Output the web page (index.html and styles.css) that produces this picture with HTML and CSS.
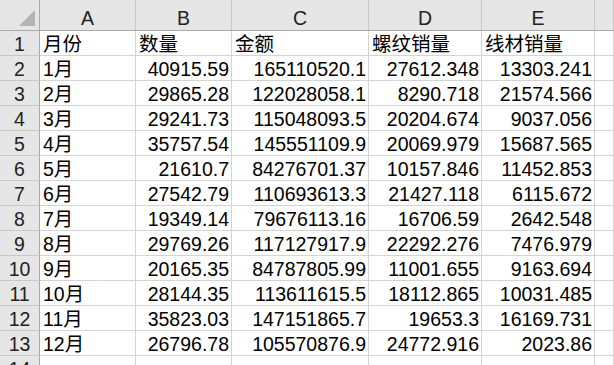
FILE: index.html
```html
<!DOCTYPE html>
<html lang="zh">
<head>
<meta charset="utf-8">
<title>Sheet</title>
<link rel="stylesheet" href="styles.css">
</head>
<body>
<div class="sheet">
  <div class="corner"><svg class="tri" width="39" height="30" viewBox="0 0 39 30"><polygon points="35,10 35,26 19,26" fill="#b4b4b4"/></svg></div>
  <div class="colh">A</div><div class="colh">B</div><div class="colh">C</div><div class="colh">D</div><div class="colh">E</div><div class="colh last"></div>

  <div class="rowh">1</div><div class="c">月份</div><div class="c">数量</div><div class="c">金额</div><div class="c">螺纹销量</div><div class="c">线材销量</div><div class="c"></div>
  <div class="rowh">2</div><div class="c">1月</div><div class="c n">40915.59</div><div class="c n">165110520.1</div><div class="c n">27612.348</div><div class="c n">13303.241</div><div class="c"></div>
  <div class="rowh">3</div><div class="c">2月</div><div class="c n">29865.28</div><div class="c n">122028058.1</div><div class="c n">8290.718</div><div class="c n">21574.566</div><div class="c"></div>
  <div class="rowh">4</div><div class="c">3月</div><div class="c n">29241.73</div><div class="c n">115048093.5</div><div class="c n">20204.674</div><div class="c n">9037.056</div><div class="c"></div>
  <div class="rowh">5</div><div class="c">4月</div><div class="c n">35757.54</div><div class="c n">145551109.9</div><div class="c n">20069.979</div><div class="c n">15687.565</div><div class="c"></div>
  <div class="rowh">6</div><div class="c">5月</div><div class="c n">21610.7</div><div class="c n">84276701.37</div><div class="c n">10157.846</div><div class="c n">11452.853</div><div class="c"></div>
  <div class="rowh">7</div><div class="c">6月</div><div class="c n">27542.79</div><div class="c n">110693613.3</div><div class="c n">21427.118</div><div class="c n">6115.672</div><div class="c"></div>
  <div class="rowh">8</div><div class="c">7月</div><div class="c n">19349.14</div><div class="c n">79676113.16</div><div class="c n">16706.59</div><div class="c n">2642.548</div><div class="c"></div>
  <div class="rowh">9</div><div class="c">8月</div><div class="c n">29769.26</div><div class="c n">117127917.9</div><div class="c n">22292.276</div><div class="c n">7476.979</div><div class="c"></div>
  <div class="rowh">10</div><div class="c">9月</div><div class="c n">20165.35</div><div class="c n">84787805.99</div><div class="c n">11001.655</div><div class="c n">9163.694</div><div class="c"></div>
  <div class="rowh">11</div><div class="c">10月</div><div class="c n">28144.35</div><div class="c n">113611615.5</div><div class="c n">18112.865</div><div class="c n">10031.485</div><div class="c"></div>
  <div class="rowh">12</div><div class="c">11月</div><div class="c n">35823.03</div><div class="c n">147151865.7</div><div class="c n">19653.3</div><div class="c n">16169.731</div><div class="c"></div>
  <div class="rowh">13</div><div class="c">12月</div><div class="c n">26796.78</div><div class="c n">105570876.9</div><div class="c n">24772.916</div><div class="c n">2023.86</div><div class="c"></div>
  <div class="rowh">14</div><div class="c"></div><div class="c"></div><div class="c"></div><div class="c"></div><div class="c"></div><div class="c"></div>
</div>
</body>
</html>
```
FILE: styles.css
```css
html, body {
  margin: 0;
  padding: 0;
  background: #ffffff;
  overflow: hidden;
}
.sheet {
  display: grid;
  grid-template-columns: 40px 96px 96px 137px 113px 113px 1fr;
  grid-template-rows: 31px;
  grid-auto-rows: 25px;
  width: 614px;
  font-family: "Liberation Sans", "Noto Sans CJK SC", sans-serif;
  font-size: 19.5px;
  color: #000;
}
.sheet > div {
  box-sizing: border-box;
  white-space: nowrap;
  overflow: visible;
}
.corner {
  background: #e6e6e6;
  border-right: 1px solid #ababab;
  border-bottom: 1px solid #ababab;
  position: relative;
}
.tri {
  display: block;
}
.colh {
  background: #e6e6e6;
  border-right: 1px solid #c8c8c8;
  border-bottom: 1px solid #ababab;
  text-align: center;
  line-height: 36px;
  height: 31px;
  color: #222;
}
.rowh {
  background: #e6e6e6;
  border-right: 1px solid #ababab;
  border-bottom: 1px solid #c8c8c8;
  text-align: center;
  line-height: 26px;
  height: 25px;
  color: #222;
}
.c {
  border-right: 1px solid #d4d4d4;
  border-bottom: 1px solid #d4d4d4;
  line-height: 26px;
  height: 25px;
  padding: 0 2px 0 3px;
}
.n {
  text-align: right;
}
```
